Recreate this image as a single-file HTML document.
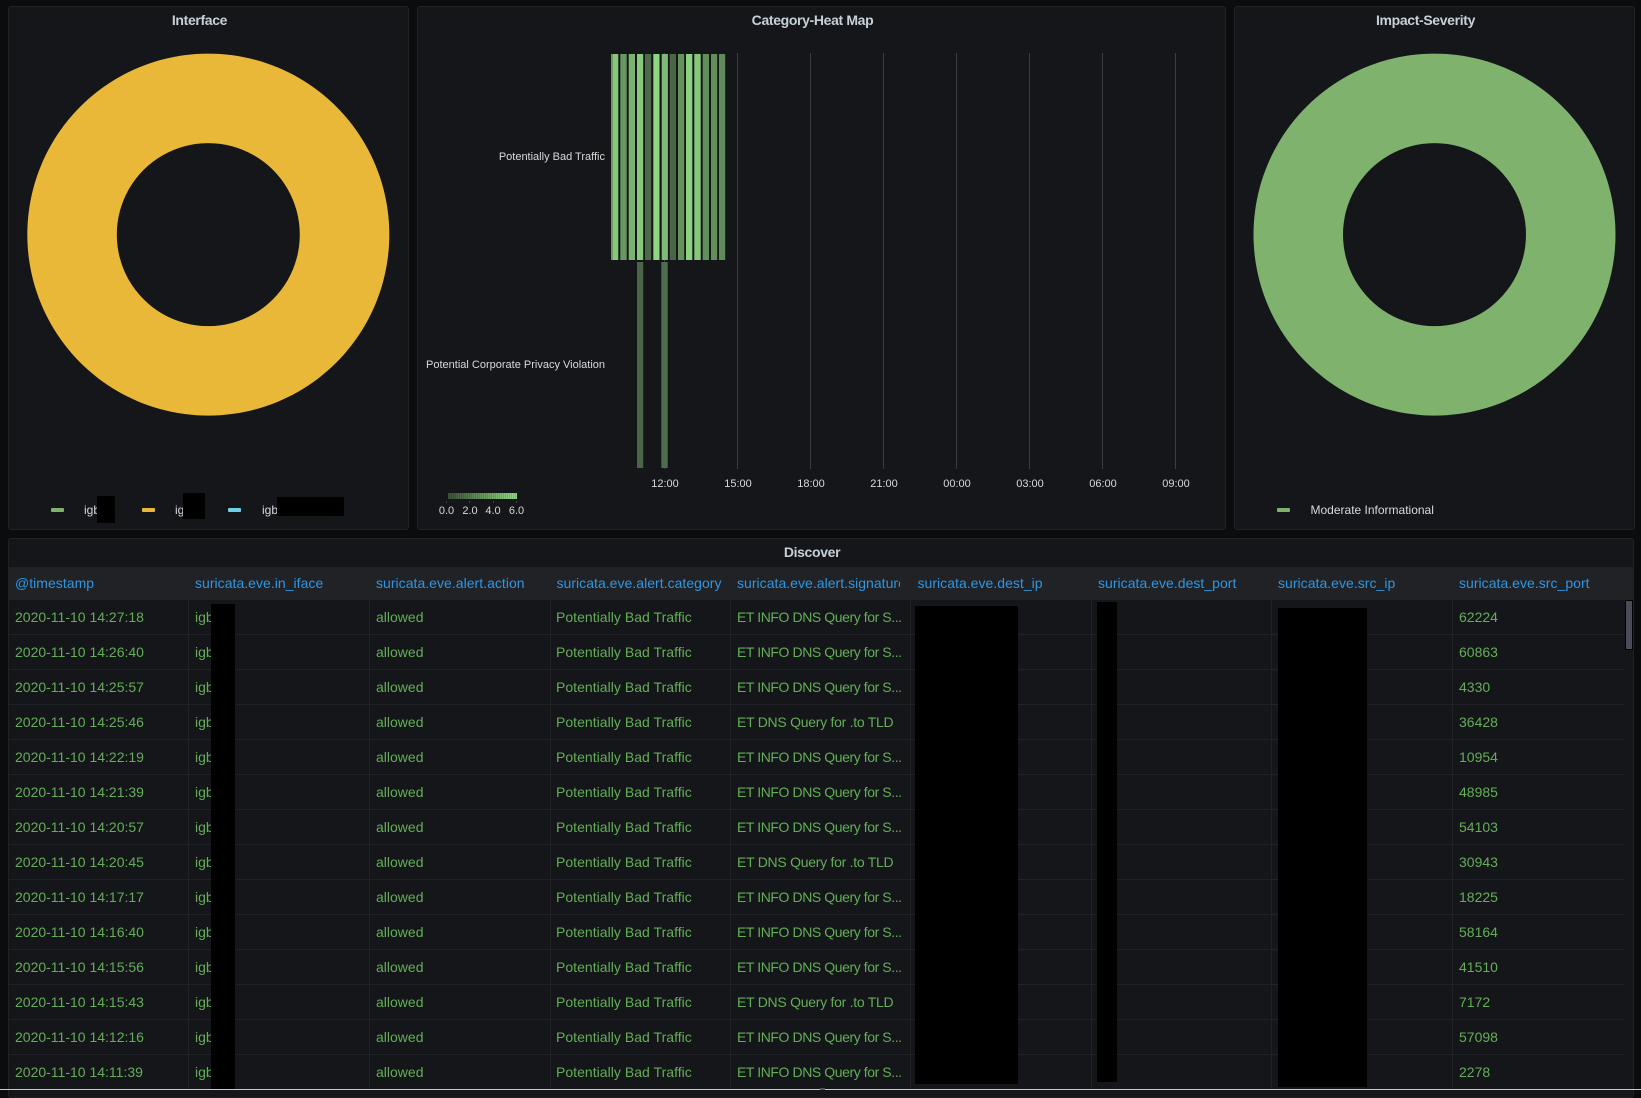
<!DOCTYPE html>
<html><head><meta charset="utf-8"><title>Dashboard</title>
<style>
html,body{margin:0;padding:0;width:1641px;height:1090px;overflow:hidden;background:#0b0c0e;font-family:"Liberation Sans",sans-serif}
.a{position:absolute}
.p{position:absolute;background:#141619;border:1px solid #202226;border-radius:3px;box-sizing:border-box}
.t{position:absolute;font-size:14px;font-weight:bold;color:#c7d0d9;line-height:16px;transform:translateX(-50%);white-space:nowrap;letter-spacing:-.35px}
.l{position:absolute;font-size:12px;color:#d8d9da;line-height:14px;white-space:nowrap}
.d{position:absolute;width:13px;height:4px;border-radius:1px;top:508px}
.x{position:absolute;font-size:11px;color:#d8d9da;line-height:13px;white-space:nowrap;transform:translateX(-50%);top:478px}
.y{position:absolute;font-size:11px;color:#d8d9da;line-height:13px;white-space:nowrap;right:1036px}
.g{position:absolute;width:1px;top:53px;height:416px;background:#3a3c40}
.k{position:absolute;background:#000}
.v{position:absolute;width:1px;top:567px;height:521px;background:#202226}
.h{position:absolute;top:567px;left:9px;width:1624px;height:33px;background:#202226}
.c{position:absolute;top:574px;font-size:14px;line-height:18px;color:#2f96e2;white-space:nowrap;letter-spacing:.03px}
.r{position:absolute;left:9px;width:1616px;height:35px;border-bottom:1px solid #202226;box-sizing:border-box;font-size:14px;color:#64ae58}
.r span{position:absolute;top:8px;line-height:18px;white-space:nowrap}
.r span:nth-child(1){left:6px}
.r span:nth-child(2){left:186px}
.r span:nth-child(3){left:367px}
.r span:nth-child(4){left:547px;letter-spacing:.03px}
.r span:nth-child(5){left:728px;letter-spacing:-.42px}
.r span:nth-child(5).u{letter-spacing:-.27px}
.r span:nth-child(6){left:1450px}
</style></head><body>

<div class="p" style="left:8px;top:6px;width:401px;height:524px"></div>
<div class="p" style="left:417px;top:6px;width:809px;height:524px"></div>
<div class="p" style="left:1234px;top:6px;width:401px;height:524px"></div>
<div class="p" style="left:8px;top:538px;width:1626px;height:560px"></div>

<div class="t" style="left:199.5px;top:12px">Interface</div>
<div class="t" style="left:812.5px;top:12px">Category-Heat Map</div>
<div class="t" style="left:1425.5px;top:12px">Impact-Severity</div>
<div class="t" style="left:812px;top:544px">Discover</div>

<svg class="a" style="left:0;top:0" width="1641" height="540">
<path fill="#eab839" fill-rule="evenodd" d="M208.3 53.6a181 181 0 1 0 .01 0zM208.3 143.1a91.5 91.5 0 1 1-.01 0z"/>
<path fill="#7eb26d" fill-rule="evenodd" d="M1434.5 53.6a181 181 0 1 0 .01 0zM1434.5 143.1a91.5 91.5 0 1 1-.01 0z"/>
</svg>

<!-- legends -->
<div class="d" style="left:51px;background:#7eb26d"></div>
<div class="l" style="left:84px;top:503px">igb</div>
<div class="d" style="left:142px;background:#eab839"></div>
<div class="l" style="left:175px;top:503px">igb</div>
<div class="d" style="left:228px;background:#6ed0e0"></div>
<div class="l" style="left:262px;top:503px">igb</div>
<div class="k" style="left:97px;top:496px;width:18px;height:27px"></div>
<div class="k" style="left:183px;top:493px;width:22px;height:26px"></div>
<div class="k" style="left:277px;top:497px;width:67px;height:19px"></div>
<div class="d" style="left:1277px;background:#7eb26d"></div>
<div class="l" style="left:1310.5px;top:503px">Moderate Informational</div>

<!-- heat map -->
<div class="g" style="left:664px"></div>
<div class="g" style="left:737px"></div>
<div class="g" style="left:810px"></div>
<div class="g" style="left:883px"></div>
<div class="g" style="left:956px"></div>
<div class="g" style="left:1029px"></div>
<div class="g" style="left:1102px"></div>
<div class="g" style="left:1175px"></div>

<svg class="a" style="left:0;top:0" width="1641" height="480">
<g>
<rect x="611" y="54" width="2" height="206" fill="#6a9a62"/>
<rect x="613" y="54" width="5.3" height="206" fill="#86c77a"/>
<rect x="620.3" y="54" width="6.4" height="206" fill="#679762"/>
<rect x="628.7" y="54" width="6.3" height="206" fill="#7ab370"/>
<rect x="637" y="54" width="6.2" height="206" fill="#88ca7c"/>
<rect x="645" y="54" width="6.2" height="206" fill="#4d6a4b"/>
<rect x="653.3" y="54" width="6.2" height="206" fill="#8ed680"/>
<rect x="661.7" y="54" width="6.2" height="206" fill="#7fb976"/>
<rect x="669.7" y="54" width="6.3" height="206" fill="#4b6549"/>
<rect x="678" y="54" width="6.2" height="206" fill="#64925d"/>
<rect x="686" y="54" width="6.3" height="206" fill="#8cd17f"/>
<rect x="694.3" y="54" width="6.4" height="206" fill="#86c77a"/>
<rect x="702.7" y="54" width="6.3" height="206" fill="#618e5b"/>
<rect x="711" y="54" width="6.2" height="206" fill="#618e5b"/>
<rect x="719" y="54" width="6.2" height="206" fill="#5f8b59"/>
<rect x="637" y="262" width="6.2" height="206" fill="#4b6549"/>
<rect x="661.3" y="262" width="6.4" height="206" fill="#4f6d4d"/>
</g>
</svg>

<div class="y" style="top:151px;right:1036px">Potentially Bad Traffic</div>
<div class="y" style="top:359px;right:1036px">Potential Corporate Privacy Violation</div>
<div class="x" style="left:665px">12:00</div>
<div class="x" style="left:738px">15:00</div>
<div class="x" style="left:811px">18:00</div>
<div class="x" style="left:884px">21:00</div>
<div class="x" style="left:957px">00:00</div>
<div class="x" style="left:1030px">03:00</div>
<div class="x" style="left:1103px">06:00</div>
<div class="x" style="left:1176px">09:00</div>

<div class="a" style="left:448px;top:493px;width:69px;height:6px;background:repeating-linear-gradient(90deg,transparent 0 1px,rgba(0,0,0,.14) 1px 2px),linear-gradient(90deg,#3b4f3a,#8dd37f 92%)"></div>
<div class="a" style="left:446px;top:501px;width:1px;height:2px;background:#444"></div>
<div class="a" style="left:469px;top:501px;width:1px;height:2px;background:#444"></div>
<div class="a" style="left:493px;top:501px;width:1px;height:2px;background:#444"></div>
<div class="a" style="left:516px;top:501px;width:1px;height:2px;background:#444"></div>
<div class="x" style="left:446.5px;top:504.5px">0.0</div>
<div class="x" style="left:470px;top:504.5px">2.0</div>
<div class="x" style="left:493px;top:504.5px">4.0</div>
<div class="x" style="left:516.5px;top:504.5px">6.0</div>

<!-- table -->
<div class="h"></div>
<div class="c" style="left:15px">@timestamp</div>
<div class="c" style="left:195px">suricata.eve.in_iface</div>
<div class="c" style="left:376px">suricata.eve.alert.action</div>
<div class="c" style="left:556.5px;width:165px;overflow:hidden">suricata.eve.alert.category</div>
<div class="c" style="left:737px;width:163px;overflow:hidden">suricata.eve.alert.signature</div>
<div class="c" style="left:917.5px">suricata.eve.dest_ip</div>
<div class="c" style="left:1098px">suricata.eve.dest_port</div>
<div class="c" style="left:1278px">suricata.eve.src_ip</div>
<div class="c" style="left:1459px">suricata.eve.src_port</div>

<div class="r" style="top:600px"><span>2020-11-10 14:27:18</span><span>igb</span><span>allowed</span><span>Potentially Bad Traffic</span><span>ET INFO DNS Query for S...</span><span>62224</span></div>
<div class="r" style="top:635px"><span>2020-11-10 14:26:40</span><span>igb</span><span>allowed</span><span>Potentially Bad Traffic</span><span>ET INFO DNS Query for S...</span><span>60863</span></div>
<div class="r" style="top:670px"><span>2020-11-10 14:25:57</span><span>igb</span><span>allowed</span><span>Potentially Bad Traffic</span><span>ET INFO DNS Query for S...</span><span>4330</span></div>
<div class="r" style="top:705px"><span>2020-11-10 14:25:46</span><span>igb</span><span>allowed</span><span>Potentially Bad Traffic</span><span class="u">ET DNS Query for .to TLD</span><span>36428</span></div>
<div class="r" style="top:740px"><span>2020-11-10 14:22:19</span><span>igb</span><span>allowed</span><span>Potentially Bad Traffic</span><span>ET INFO DNS Query for S...</span><span>10954</span></div>
<div class="r" style="top:775px"><span>2020-11-10 14:21:39</span><span>igb</span><span>allowed</span><span>Potentially Bad Traffic</span><span>ET INFO DNS Query for S...</span><span>48985</span></div>
<div class="r" style="top:810px"><span>2020-11-10 14:20:57</span><span>igb</span><span>allowed</span><span>Potentially Bad Traffic</span><span>ET INFO DNS Query for S...</span><span>54103</span></div>
<div class="r" style="top:845px"><span>2020-11-10 14:20:45</span><span>igb</span><span>allowed</span><span>Potentially Bad Traffic</span><span class="u">ET DNS Query for .to TLD</span><span>30943</span></div>
<div class="r" style="top:880px"><span>2020-11-10 14:17:17</span><span>igb</span><span>allowed</span><span>Potentially Bad Traffic</span><span>ET INFO DNS Query for S...</span><span>18225</span></div>
<div class="r" style="top:915px"><span>2020-11-10 14:16:40</span><span>igb</span><span>allowed</span><span>Potentially Bad Traffic</span><span>ET INFO DNS Query for S...</span><span>58164</span></div>
<div class="r" style="top:950px"><span>2020-11-10 14:15:56</span><span>igb</span><span>allowed</span><span>Potentially Bad Traffic</span><span>ET INFO DNS Query for S...</span><span>41510</span></div>
<div class="r" style="top:985px"><span>2020-11-10 14:15:43</span><span>igb</span><span>allowed</span><span>Potentially Bad Traffic</span><span class="u">ET DNS Query for .to TLD</span><span>7172</span></div>
<div class="r" style="top:1020px"><span>2020-11-10 14:12:16</span><span>igb</span><span>allowed</span><span>Potentially Bad Traffic</span><span>ET INFO DNS Query for S...</span><span>57098</span></div>
<div class="r" style="top:1055px;border-bottom:0"><span>2020-11-10 14:11:39</span><span>igb</span><span>allowed</span><span>Potentially Bad Traffic</span><span>ET INFO DNS Query for S...</span><span>2278</span></div>

<div class="v" style="left:188px"></div>
<div class="v" style="left:369px"></div>
<div class="v" style="left:550px"></div>
<div class="v" style="left:730px"></div>
<div class="v" style="left:910px"></div>
<div class="v" style="left:1091px"></div>
<div class="v" style="left:1271px"></div>
<div class="v" style="left:1452px"></div>

<div class="k" style="left:211px;top:604px;width:24px;height:486px"></div>
<div class="k" style="left:915px;top:606px;width:103px;height:478px"></div>
<div class="k" style="left:1097px;top:602px;width:20px;height:480px"></div>
<div class="k" style="left:1278px;top:608px;width:89px;height:479px"></div>

<div class="a" style="left:1625px;top:600px;width:8px;height:50px;box-sizing:border-box;border:1px solid #000;background:#4a4b57"></div>
<div class="a" style="left:0;top:1089px;width:1641px;height:1px;background:#c8ccd0"></div>
<div class="a" style="left:820px;top:1088px;width:5px;height:2px;background:#555"></div>
</body></html>
